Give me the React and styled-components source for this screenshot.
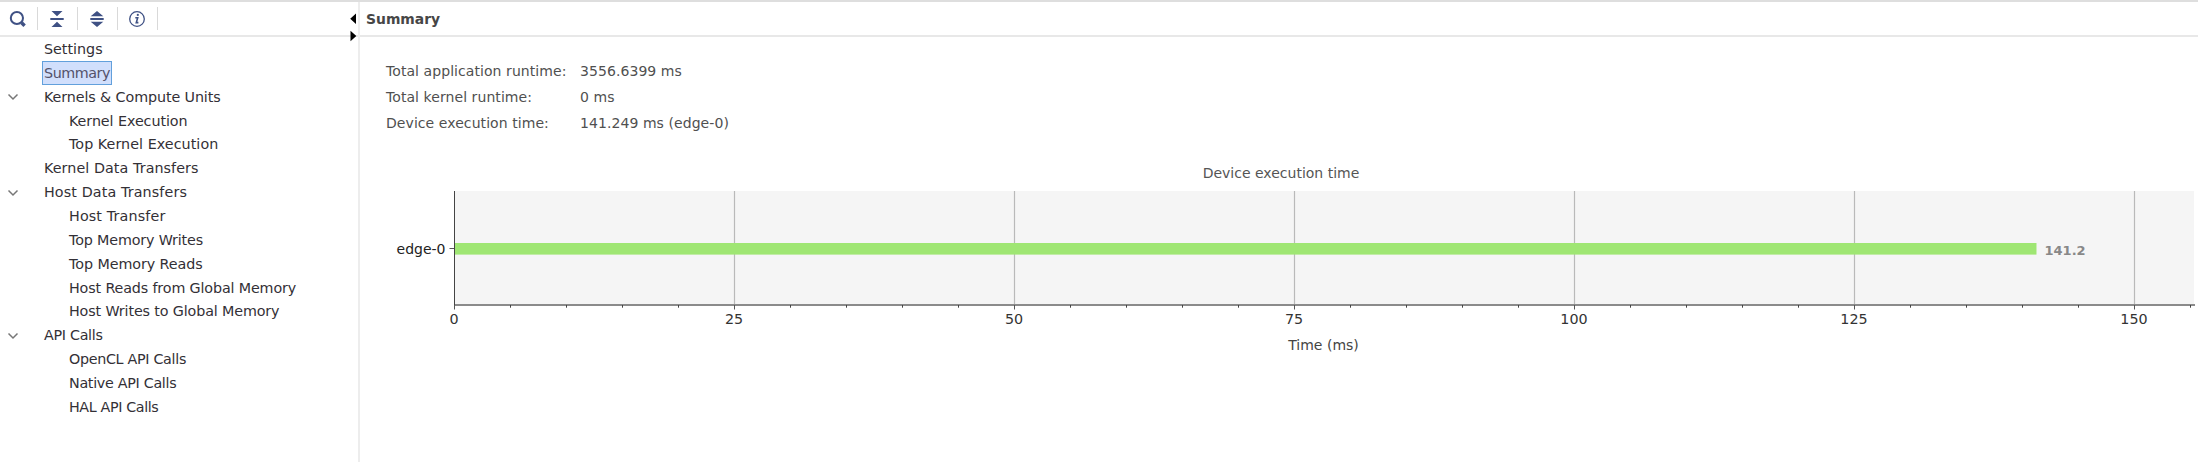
import React from "react";
import styled, { createGlobalStyle } from "styled-components";

const GlobalStyle = createGlobalStyle`
  * { box-sizing: border-box; }
  body {
    margin: 0;
    background: #fff;
    font-family: "DejaVu Sans", sans-serif;
    font-size: 14px;
    color: #464646;
    overflow: hidden;
  }
`;

const Window = styled.div`
  display: flex;
  width: 2198px;
  height: 462px;
  border-top: 2px solid #dedede;
`;

const Sidebar = styled.aside`
  display: flex;
  flex-direction: column;
  width: 360px;
  border-right: 2px solid #ededed;
`;

const Toolbar = styled.div`
  position: relative;
  display: flex;
  align-items: center;
  height: 35px;
  border-bottom: 2px solid #e8e8e8;
`;

const ToolButton = styled.button`
  display: flex;
  align-items: center;
  justify-content: center;
  width: ${(p) => p.$width || 40}px;
  height: 23px;
  padding: 0 1px 0 0;
  border: 0;
  border-right: 1px solid #d9d9d9;
  background: none;
  color: #3f5184;
`;

const SashArrows = styled.svg`
  position: absolute;
  left: 349px;
  top: 10px;
`;

const Tree = styled.ul`
  display: flex;
  flex-direction: column;
  margin: 0;
  padding: 0;
  list-style: none;
  color: #333036;
`;

const TreeRow = styled.li`
  display: flex;
  align-items: center;
  height: 23.87px;
  padding-left: ${(p) => (p.$nested ? 25 : 0)}px;
`;

const Twisty = styled.svg`
  flex: none;
  width: 12px;
  height: 8px;
  margin: 1px 23px 0 7px;
  visibility: ${(p) => (p.$visible ? "visible" : "hidden")};
`;

const TreeLabel = styled.span`
  display: flex;
  align-items: center;
  height: 24px;
  padding: 0 1px;
  border: 1px solid ${(p) => (p.$selected ? "#62a0dc" : "transparent")};
  background: ${(p) => (p.$selected ? "#d1dffc" : "transparent")};
  color: ${(p) => (p.$selected ? "#55526a" : "inherit")};
  font-size: 14.3px;
  letter-spacing: ${(p) => p.$tracking || 0}px;
  white-space: nowrap;
`;

const Main = styled.main`
  flex: 1;
  display: flex;
  flex-direction: column;
`;

const Title = styled.h1`
  display: flex;
  align-items: center;
  height: 35px;
  margin: 0;
  padding: 0 0 0 6px;
  border-bottom: 2px solid #e8e8e8;
  font-size: 13.9px;
  font-weight: bold;
`;

const Facts = styled.dl`
  display: grid;
  grid-template-columns: 194px 1fr;
  grid-auto-rows: 26px;
  align-items: center;
  margin: 21px 0 0 26px;
  font-size: 14px;
  letter-spacing: 0.07px;
  color: #505050;
`;

const FactName = styled.dt`
  white-space: nowrap;
`;

const FactValue = styled.dd`
  margin: 0;
`;

const Chart = styled.svg`
  display: block;
  margin-top: 25px;
  font-family: "DejaVu Sans", sans-serif;
  font-size: 14.3px;
`;

const ITEMS = [
  { label: "Settings" },
  { label: "Summary", selected: true, tracking: -0.45 },
  { label: "Kernels & Compute Units", open: true, tracking: -0.1 },
  { label: "Kernel Execution", nested: true, tracking: -0.07 },
  { label: "Top Kernel Execution", nested: true, tracking: 0.05 },
  { label: "Kernel Data Transfers", tracking: 0.07 },
  { label: "Host Data Transfers", open: true, tracking: 0.12 },
  { label: "Host Transfer", nested: true, tracking: 0.14 },
  { label: "Top Memory Writes", nested: true, tracking: -0.15 },
  { label: "Top Memory Reads", nested: true, tracking: -0.07 },
  { label: "Host Reads from Global Memory", nested: true, tracking: -0.14 },
  { label: "Host Writes to Global Memory", nested: true, tracking: -0.13 },
  { label: "API Calls", open: true, tracking: -0.3 },
  { label: "OpenCL API Calls", nested: true, tracking: -0.31 },
  { label: "Native API Calls", nested: true, tracking: -0.3 },
  { label: "HAL API Calls", nested: true, tracking: -0.38 },
];

const FACTS = [
  ["Total application runtime:", "3556.6399 ms"],
  ["Total kernel runtime:", "0 ms"],
  ["Device execution time:", "141.249 ms (edge-0)"],
];

const SearchIcon = () => (
  <svg width="18" height="18" viewBox="0 0 18 18" fill="none" stroke="currentColor">
    <circle cx="7.9" cy="8" r="6.1" strokeWidth="2" />
    <path d="M12.6 12.8L15.6 15.8" strokeWidth="3.4" />
  </svg>
);

const CollapseIcon = () => (
  <svg width="16" height="18" viewBox="0 0 16 18" fill="currentColor">
    <path d="M2.5 1h11L8 6.2zM1.3 8h13.4v2H1.3zM2.5 17h11L8 11.8z" />
  </svg>
);

const ExpandIcon = () => (
  <svg width="16" height="18" viewBox="0 0 16 18" fill="currentColor">
    <path d="M8 .9L14.3 6.2H1.7zM1.3 8h13.4v2H1.3zM8 17.1L1.7 11.8h12.6z" />
  </svg>
);

const InfoIcon = () => (
  <svg width="18" height="18" viewBox="0 0 18 18" fill="none" stroke="currentColor">
    <circle cx="9" cy="9" r="7.3" strokeWidth="1.3" />
    <path d="M7.3 7.7H9.7L8.3 12.6H10.4" strokeWidth="1.6" />
    <circle cx="9.8" cy="4.9" r="1.1" fill="currentColor" stroke="none" />
  </svg>
);

const ORIGIN = 94.5;
const PX_PER_MS = 11.2;
const xOf = (ms) => ORIGIN + ms * PX_PER_MS;
const MAJOR = [0, 25, 50, 75, 100, 125, 150];
const MINOR = Array.from({ length: 32 }, (_, i) => i * 5).filter((v) => v % 25);

function ExecutionChart() {
  return (
    <Chart width="1838" height="208" viewBox="0 160 1838 208">
      <text x="921" y="177" textAnchor="middle" fontSize="14" fill="#555">
        Device execution time
      </text>
      <rect x="95" y="190" width="1739" height="114" fill="#f5f5f5" />
      {MAJOR.slice(1).map((v) => (
        <line key={v} x1={xOf(v)} x2={xOf(v)} y1="190" y2="303" stroke="#b9b9b9" strokeWidth="1.2" />
      ))}
      <rect x="95" y="242" width={141.249 * PX_PER_MS - 0.5} height="11.6" fill="#9fe673" />
      <rect x="94" y="303" width="1741" height="2" fill="#8b8b8b" />
      <line x1="94.5" x2="94.5" y1="190" y2="308" stroke="#444" />
      <line x1="89.5" x2="94" y1="247.5" y2="247.5" stroke="#555" />
      {MINOR.map((v) => (
        <line key={v} x1={xOf(v)} x2={xOf(v)} y1="304" y2="306.7" stroke="#444" />
      ))}
      {MAJOR.map((v) => (
        <g key={v}>
          <line x1={xOf(v)} x2={xOf(v)} y1="304" y2="308.5" stroke="#555" />
          <text x={xOf(v) - 0.5} y="322.6" textAnchor="middle" fill="#333">{v}</text>
        </g>
      ))}
      <text x="85.5" y="253.4" textAnchor="end" fontSize="14" fill="#222">edge-0</text>
      <text x="1684.5" y="253.7" fontSize="13" fontWeight="bold" fill="#888">141.2</text>
      <text x="963.5" y="349" textAnchor="middle" fontSize="14" fill="#444">Time (ms)</text>
    </Chart>
  );
}

export default function App() {
  return (
    <Window>
      <GlobalStyle />
      <Sidebar>
        <Toolbar>
          <ToolButton $width={38} aria-label="Search"><SearchIcon /></ToolButton>
          <ToolButton aria-label="Collapse all"><CollapseIcon /></ToolButton>
          <ToolButton aria-label="Expand all"><ExpandIcon /></ToolButton>
          <ToolButton aria-label="Information"><InfoIcon /></ToolButton>
          <SashArrows width="8" height="30" viewBox="0 0 8 30">
            <path d="M7 1.5V12L1.2 6.7zM1.5 18.8V29.3L7.3 24z" fill="#000" />
          </SashArrows>
        </Toolbar>
        <Tree>
          {ITEMS.map((item) => (
            <TreeRow key={item.label} $nested={item.nested}>
              <Twisty viewBox="0 0 12 8" $visible={item.open}>
                <path d="M1.5 1.5L6 6L10.5 1.5" fill="none" stroke="#777" strokeWidth="1.5" />
              </Twisty>
              <TreeLabel $selected={item.selected} $tracking={item.tracking}>
                {item.label}
              </TreeLabel>
            </TreeRow>
          ))}
        </Tree>
      </Sidebar>
      <Main>
        <Title>Summary</Title>
        <Facts>
          {FACTS.map(([name, value]) => (
            <React.Fragment key={name}>
              <FactName>{name}</FactName>
              <FactValue>{value}</FactValue>
            </React.Fragment>
          ))}
        </Facts>
        <ExecutionChart />
      </Main>
    </Window>
  );
}
